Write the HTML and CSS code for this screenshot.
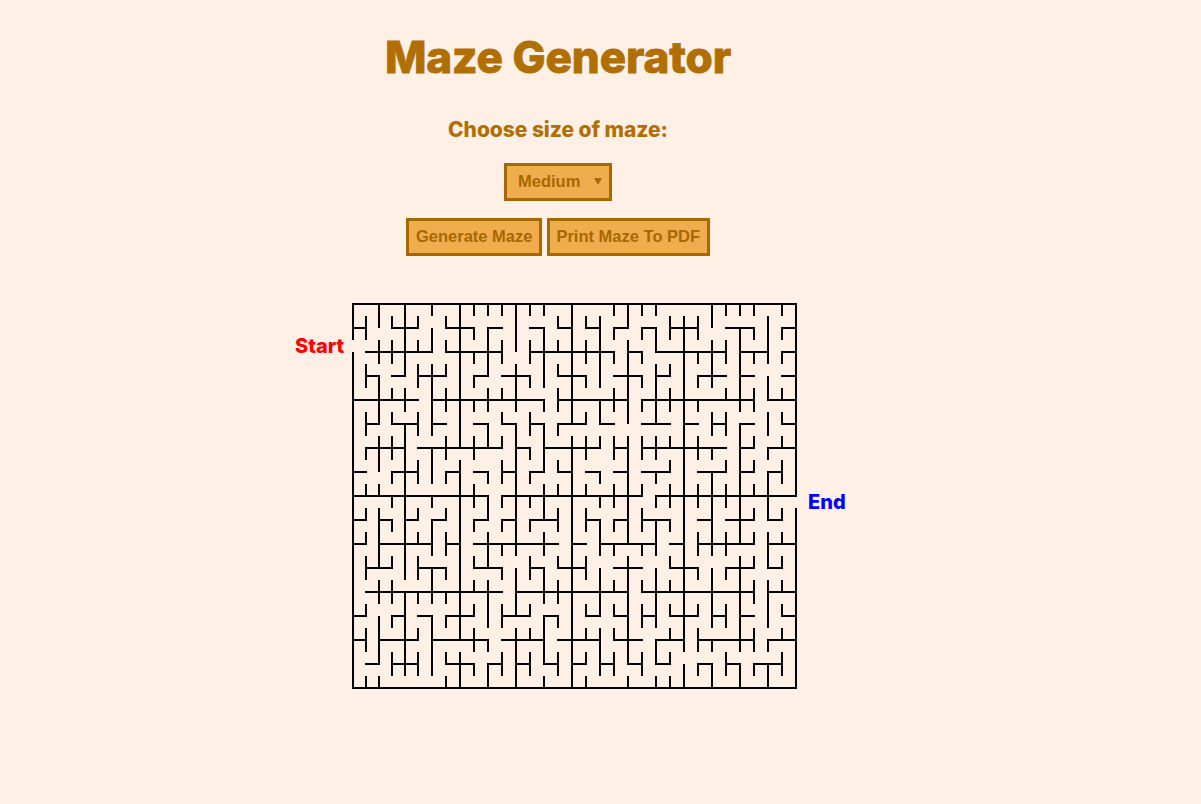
FILE: index.html
```html
<!DOCTYPE html>
<html lang="en">
<head>
    <meta charset="UTF-8">
    <meta name="viewport" content="width=device-width, initial-scale=1.0">
    <title>Maze Generator</title>
    <link rel="stylesheet" href="styles.css">
</head>
<body>
    <div class="controls">
        <h1 class="title">Maze Generator</h1>
        <h3 class="size-label">Choose size of maze:</h3>
        <div class="select-wrap">
            <select class="size-select">
                <option>Small</option>
                <option selected>Medium</option>
                <option>Large</option>
            </select>
        </div>
        <div class="button-row">
            <button class="btn">Generate Maze</button>
            <button class="btn">Print Maze To PDF</button>
        </div>
    </div>
    <div class="maze-row">
        <div class="maze-label start">Start</div>
        <svg id="maze" class="maze" width="446" height="386" viewBox="0 0 446 386">
            <path id="mazeV" class="wall"></path>
            <path id="mazeH" class="wall wall-h"></path>
        </svg>
        <div class="maze-label end">End</div>
    </div>
    <script src="maze.js"></script>
</body>
</html>
```
FILE: styles.css
```css
body {
    margin: 0;
    background-color: #fff0e6;
    font-family: "Liberation Sans", Arial, sans-serif;
}
.controls {
    display: flex;
    flex-direction: column;
    align-items: center;
    width: 1116px;
}
.title {
    margin: 28px 0 0;
    font-family: Inter, sans-serif;
    font-size: 44px;
    line-height: 58px;
    font-weight: 800;
    letter-spacing: -0.1px;
    color: #b06f00;
    -webkit-text-stroke: 0.8px #b06f00;
}
.size-label {
    margin: 30px 0 0;
    font-family: Inter, sans-serif;
    font-size: 21px;
    line-height: 28px;
    font-weight: 800;
    letter-spacing: -0.05px;
    color: #b06f00;
}
.select-wrap {
    position: relative;
    margin-top: 19px;
    height: 38px;
}
/* arrow of the select */
.select-wrap::after {
    content: "";
    position: absolute;
    left: 90px;
    top: 15px;
    border-left: 4px solid transparent;
    border-right: 4px solid transparent;
    border-top: 7px solid #a86800;
}
.size-select {
    appearance: none;
    -webkit-appearance: none;
    width: 108px;
    height: 38px;
    padding: 0 0 2px 11px;
    font-family: "Liberation Sans", Arial, sans-serif;
    font-size: 16.5px;
    font-weight: bold;
    color: #a86800;
    background-color: #f0ad4e;
    border: 3px solid #a86800;
    border-radius: 0;
}
.button-row {
    display: flex;
    gap: 5px;
    margin-top: 17px;
}
.btn {
    height: 38px;
    padding: 0 6.5px 2px;
    font-family: "Liberation Sans", Arial, sans-serif;
    font-size: 16.5px;
    font-weight: bold;
    color: #a86800;
    background-color: #f0ad4e;
    border: 3px solid #a86800;
}
.maze-row {
    display: flex;
    align-items: flex-start;
    margin-top: 47px;
    padding-left: 295px;
}
.maze-label {
    font-family: Inter, sans-serif;
    font-size: 20px;
    line-height: 24px;
    font-weight: 800;
}
.start {
    width: 57px;
    margin-top: 31px;
    color: #ff0000;
}
.end {
    margin-left: 10px;
    margin-top: 187px;
    color: #0000ff;
}
.wall {
    fill: none;
    stroke: #000;
    stroke-width: 2;
}
.wall-h {
    stroke-linecap: square;
}
```
FILE: maze.js
```js
// column lines, first six columns are a pixel narrower
let colX = [1, 14, 27, 40, 53, 66];
for (let i = 0; i < 27; i++) {
    colX.push(80 + i * 14);
}
function rowY(j) {
    return 1 + j * 12;
}

// wall lists: line index -> "from-to" pairs
let verticals = [
    "0-3 4-32",
    "1-3 5-7 9-11 12-13 15-16 17-18 19-20 21-23 25-26 27-29 31-32",
    "0-2 3-5 6-10 11-14 15-16 17-22 23-25 26-30 31-32",
    "1-2 3-5 7-8 9-10 11-13 14-15 16-17 18-19 21-22 23-25 26-27 29-31",
    "0-6 7-9 10-23 24-31",
    "1-2 3-4 5-7 9-11 13-15 17-18 19-20 21-23 24-25 27-28 29-31",
    "0-1 2-4 5-11 12-15 16-17 18-21 22-25 26-31",
    "1-2 3-4 5-6 7-9 11-13 14-15 17-18 19-21 22-23 24-25 26-27 29-30 31-32",
    "0-12 13-28 29-32",
    "0-1 2-3 4-5 6-7 8-9 11-13 15-17 18-19 21-22 23-24 25-26 27-29 30-31",
    "0-1 2-6 7-9 10-12 14-15 16-18 19-22 23-27 28-29 30-32",
    "0-1 3-5 7-8 9-10 11-12 13-15 16-17 18-19 20-21 22-23 25-27 29-31",
    "0-4 5-9 10-21 22-26 27-32",
    "0-1 3-5 6-7 9-11 12-13 14-15 16-17 18-19 21-23 25-26 27-28 29-31",
    "0-1 2-7 8-9 10-14 15-18 19-21 22-25 26-30 31-32",
    "1-2 3-4 5-6 7-9 10-11 13-14 15-16 17-19 21-22 23-25 26-27 29-31",
    "0-10 11-32",
    "1-2 3-5 6-7 9-10 11-13 15-16 17-19 21-23 25-26 27-28 29-30 31-32",
    "1-7 8-10 11-12 14-15 16-17 18-21 22-26 27-31",
    "0-1 2-3 4-5 7-9 11-13 15-17 18-19 20-21 23-24 25-26 27-28 29-31",
    "0-2 3-10 11-20 21-30 31-32",
    "0-1 2-3 4-5 6-7 8-9 11-13 15-16 17-19 20-21 23-24 25-27 29-31",
    "0-1 2-4 5-10 11-13 14-15 16-17 18-21 22-27 28-30 31-32",
    "1-3 5-6 7-9 11-12 13-14 15-17 18-19 21-22 23-24 25-26 27-28 29-30 31-32",
    "1-29 30-32",
    "1-3 4-5 6-7 8-9 11-13 15-17 19-21 22-23 25-26 27-29 30-31",
    "0-2 3-7 9-11 12-13 14-21 22-27 28-29 30-32",
    "0-1 3-5 7-8 9-11 13-14 15-17 19-21 22-23 25-27 29-31",
    "0-1 2-9 10-20 21-29 30-32",
    "0-1 2-3 4-5 7-9 11-12 13-14 15-16 17-18 19-20 21-22 23-25 27-29 30-31",
    "1-5 6-8 9-11 12-13 14-18 19-22 23-27 28-29 30-32",
    "0-1 2-3 4-5 7-8 9-10 11-12 13-15 17-18 19-20 21-22 23-24 25-26 27-28 29-31",
    "0-16 17-32"
];
let horizontals = {
    0: "0-32",
    2: "0-1 3-5 7-9 10-11 13-14 15-16 17-18 19-20 21-22 23-25 27-29 31-32",
    4: "1-6 7-11 13-19 20-21 22-27 28-30 31-32",
    6: "1-2 3-4 5-7 9-10 11-13 15-17 19-21 22-23 25-27 28-29 31-32",
    8: "0-5 6-14 15-20 21-29 30-32",
    10: "1-2 3-5 6-7 9-10 11-12 13-14 15-17 18-19 21-23 24-25 26-27 28-29 31-32",
    12: "1-4 5-11 12-13 14-18 19-20 21-27 28-29 30-32",
    14: "0-1 3-5 7-8 9-10 11-12 13-14 15-16 17-18 19-20 21-23 25-27 28-29 30-31",
    16: "0-10 11-21 22-32",
    18: "0-1 2-3 4-5 6-7 9-10 11-12 13-15 17-18 19-20 21-23 25-26 27-29 30-31",
    20: "0-1 2-6 7-8 9-15 16-17 18-22 23-24 25-29 30-32",
    22: "1-3 5-7 9-11 13-14 15-17 19-21 23-25 27-29 30-31",
    24: "1-11 12-20 21-29 30-32",
    26: "0-1 3-4 5-6 7-9 11-13 14-15 17-18 19-20 21-22 23-25 26-27 28-29 31-32",
    28: "0-1 2-5 6-10 11-14 15-18 19-21 22-24 25-29 30-32",
    30: "1-2 3-5 7-9 10-11 12-13 14-15 16-17 18-19 20-21 22-23 25-26 27-28 29-31",
    32: "0-32"
};

function spans(text) {
    return text.split(" ").map(function(s) {
        return s.split("-").map(Number);
    });
}

let v = "";
verticals.forEach(function(text, i) {
    spans(text).forEach(function(s) {
        v += "M" + colX[i] + " " + rowY(s[0]) + "V" + rowY(s[1]);
    });
});
let h = "";
Object.keys(horizontals).forEach(function(j) {
    spans(horizontals[j]).forEach(function(s) {
        h += "M" + colX[s[0]] + " " + rowY(j) + "H" + colX[s[1]];
    });
});
document.getElementById("mazeV").setAttribute("d", v);
document.getElementById("mazeH").setAttribute("d", h);
```
